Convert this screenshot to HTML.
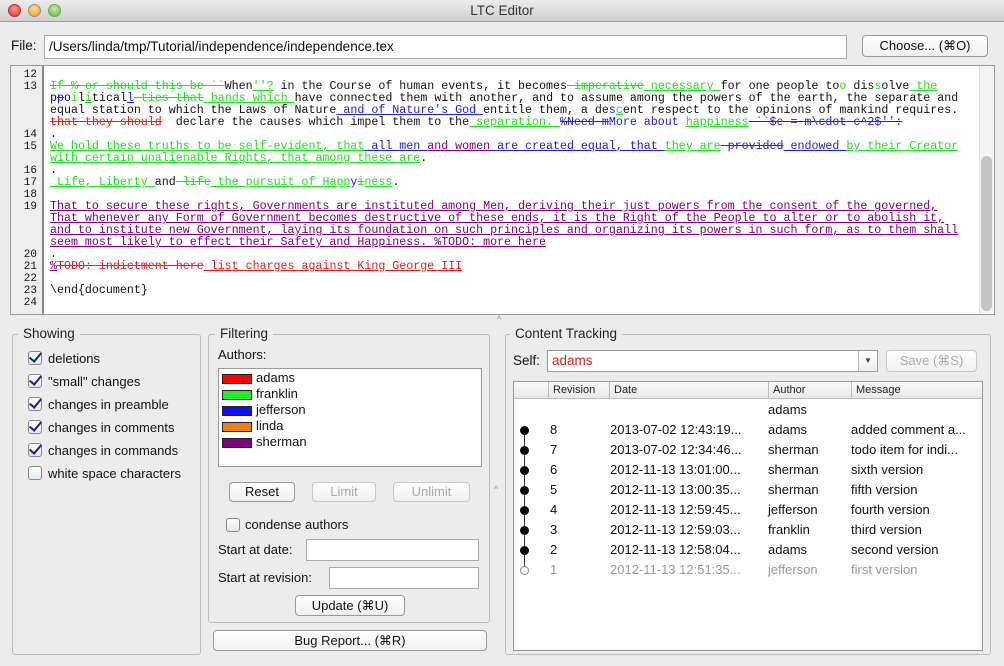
<!DOCTYPE html>
<html><head><meta charset="utf-8">
<style>
*{box-sizing:border-box;margin:0;padding:0}
body{width:1004px;height:666px;background:#ececec;font-family:"Liberation Sans",sans-serif;font-size:13px;color:#111;position:relative;overflow:hidden}
.abs{position:absolute;white-space:nowrap}
#title{left:0;top:0;width:1004px;height:22px;background:linear-gradient(#ececec,#cfcfcf);border-bottom:1px solid #999;text-align:center;line-height:22px;font-size:13.5px;color:#333}
.dot{position:absolute;top:4px;width:13px;height:13px;border-radius:50%}
.in{background:#fff;border:1px solid #aaa}
.btn{position:absolute;background:linear-gradient(#fff,#f0f0f0);border:1px solid #999;border-radius:4px;text-align:center;font-size:13px;color:#111;white-space:nowrap}
.btn.dis{color:#aaa;border-color:#c8c8c8}
#ed{left:10px;top:65px;width:985px;height:250px;background:#fff;border:1px solid #999}
#gut{left:0;top:0;width:33px;height:248px;background:#eee;border-right:2px solid #888;font-family:"Liberation Mono",monospace;font-size:11px;text-align:right;padding-right:4px}
.ln{position:absolute;right:5px;height:12px;line-height:12px}
#txt{left:39px;top:3px;font-family:"Liberation Mono",monospace;font-size:11.65px;line-height:12px;white-space:pre;color:#111}
.g{color:#22e022}.b{color:#2020e0}.r{color:#e02020}.p{color:#800080}
.u{text-decoration:underline}.s{text-decoration:line-through}
fieldset{position:absolute;border:1px solid #bbb;border-radius:3px}
.leg{position:absolute;background:#ececec;padding:0 5px;font-size:13.5px;color:#222;white-space:nowrap}
.cb{position:absolute;left:16px;width:14px;height:14px;border:1px solid #888;border-radius:3px;background:linear-gradient(#fff,#dfe8f5)}
.cb.on::after{content:"";position:absolute;left:3px;top:-2px;width:5px;height:10px;border:solid #1a2a66;border-width:0 2.5px 2.5px 0;transform:rotate(40deg)}
.cl{position:absolute;left:36px;font-size:13px;white-space:nowrap}
.sw{position:absolute;left:3px;width:30px;height:10px;border:1px solid #222}
.row{position:absolute;left:0;width:466px;height:20px;line-height:20px;font-size:13px}
.row span{position:absolute;white-space:nowrap}
</style></head><body>
<div id="title" class="abs">LTC Editor</div>
<div class="dot" style="left:8px;background:radial-gradient(circle at 50% 35%,#ff9a90,#d5332a);border:1px solid #a33"></div>
<div class="dot" style="left:28px;background:radial-gradient(circle at 50% 35%,#ffe08a,#e0a020);border:1px solid #a87"></div>
<div class="dot" style="left:48px;background:radial-gradient(circle at 50% 35%,#c8f0a0,#60b040);border:1px solid #6a4"></div>

<div class="abs" style="left:11px;top:38px;font-size:13.5px">File:</div>
<div class="abs in" style="left:44px;top:35px;width:803px;height:24px;padding-left:4px;line-height:22px;font-size:13.5px">/Users/linda/tmp/Tutorial/independence/independence.tex</div>
<div class="btn" style="left:862px;top:35px;width:126px;height:22px;line-height:20px">Choose... (⌘O)</div>

<div id="ed" class="abs">
<div id="gut" class="abs">
<div class="ln" style="top:3px">12</div><div class="ln" style="top:15px">13</div>
<div class="ln" style="top:63px">14</div><div class="ln" style="top:75px">15</div>
<div class="ln" style="top:99px">16</div><div class="ln" style="top:111px">17</div>
<div class="ln" style="top:123px">18</div><div class="ln" style="top:135px">19</div>
<div class="ln" style="top:183px">20</div><div class="ln" style="top:195px">21</div>
<div class="ln" style="top:207px">22</div><div class="ln" style="top:219px">23</div>
<div class="ln" style="top:231px">24</div>
</div>
<div id="txt" class="abs">
<span class="g s">If % or should this be ``</span>When<span class="g u">''?</span> in the Course of human events, it becomes<span class="g s"> imperative</span><span class="g u"> necessary </span>for one people to<span class="g">o</span> dis<span class="g">s</span>olve<span class="g u"> the</span>
p<span class="b s">p</span>o<span class="g">i</span>l<span class="g u">i</span>tical<span class="b u">l</span><span class="g s"> ties that</span><span class="g u"> bands which </span>have connected them with another, and to assume among the powers of the earth, the separate and
equal station to which the Laws of Nature<span class="b u"> and of Nature's God </span>entitle them, a de<span class="b">s</span><span class="g u">c</span>ent respect to the opinions of mankind requires.
<span class="r s">that they should</span>  declare the causes which impel them to the<span class="g u"> separation. </span><span class="b s">%Need m</span><span class="b">More about </span><span class="g u">happiness</span><span class="b s"> ``$e = m\cdot c^2$'':</span>
.
<span class="g u">We hold these truths to be self-evident, that</span><span class="b u"> all men </span><span class="p u">and women</span><span class="b u"> are created equal, that </span><span class="g u">they are</span><span class="b s"> provided</span><span class="b u"> endowed </span><span class="g u">by their Creator</span>
<span class="g u">with certain unalienable Rights, that among these are</span>.
.
<span class="g u"> Life, Liberty </span>and<span class="g s"> life</span><span class="g u"> the pursuit of Happ</span><span class="b">y</span><span class="g s">i</span><span class="g u">ness</span>.

<span class="p u">That to secure these rights, Governments are instituted among Men, deriving their just powers from the consent of the governed,</span>
<span class="p u">That whenever any Form of Government becomes destructive of these ends, it is the Right of the People to alter or to abolish it,</span>
<span class="p u">and to institute new Government, laying its foundation on such principles and organizing its powers in such form, as to them shall</span>
<span class="p u">seem most likely to effect their Safety and Happiness. %TODO: more here</span>
.
<span class="p u">%</span><span class="r s">TODO: indictment here</span><span class="r u"> list charges against King George III</span>

\end{document}
</div>
<div class="abs" style="left:968px;top:0;width:15px;height:248px;background:#f4f4f4;border-left:1px solid #ddd"></div>
<div class="abs" style="left:970px;top:90px;width:11px;height:155px;background:#c4c4c4;border-radius:6px"></div>
</div>

<!-- Showing -->
<fieldset style="left:12px;top:334px;width:189px;height:321px"></fieldset>
<div class="leg" style="left:18px;top:326px">Showing</div>
<div class="abs" style="left:12px;top:334px;width:189px">
<div class="cb on" style="top:17px"></div><div class="cl" style="top:17px">deletions</div>
<div class="cb on" style="top:40px"></div><div class="cl" style="top:40px">"small" changes</div>
<div class="cb on" style="top:63px"></div><div class="cl" style="top:63px">changes in preamble</div>
<div class="cb on" style="top:86px"></div><div class="cl" style="top:86px">changes in comments</div>
<div class="cb on" style="top:109px"></div><div class="cl" style="top:109px">changes in commands</div>
<div class="cb" style="top:132px"></div><div class="cl" style="top:132px">white space characters</div>
</div>

<!-- Filtering -->
<fieldset style="left:208px;top:334px;width:282px;height:289px"></fieldset>
<div class="leg" style="left:215px;top:326px">Filtering</div>
<div class="abs" style="left:218px;top:347px">Authors:</div>
<div class="abs in" style="left:218px;top:368px;width:264px;height:99px;border-color:#999">
<div class="sw" style="top:5px;background:#f00"></div><div class="abs" style="left:37px;top:1px">adams</div>
<div class="sw" style="top:21px;background:#20f020"></div><div class="abs" style="left:37px;top:17px">franklin</div>
<div class="sw" style="top:37px;background:#1010f0"></div><div class="abs" style="left:37px;top:33px">jefferson</div>
<div class="sw" style="top:53px;background:#f08010"></div><div class="abs" style="left:37px;top:49px">linda</div>
<div class="sw" style="top:69px;background:#800080"></div><div class="abs" style="left:37px;top:65px">sherman</div>
</div>
<div class="btn" style="left:229px;top:482px;width:66px;height:20px;line-height:18px">Reset</div>
<div class="btn dis" style="left:312px;top:482px;width:64px;height:20px;line-height:18px">Limit</div>
<div class="btn dis" style="left:393px;top:482px;width:77px;height:20px;line-height:18px">Unlimit</div>
<div class="cb" style="left:226px;top:518px"></div><div class="abs" style="left:245px;top:517px">condense authors</div>
<div class="abs" style="left:218px;top:542px">Start at date:</div>
<div class="abs in" style="left:306px;top:539px;width:173px;height:22px"></div>
<div class="abs" style="left:218px;top:570px">Start at revision:</div>
<div class="abs in" style="left:329px;top:567px;width:150px;height:22px"></div>
<div class="btn" style="left:295px;top:595px;width:110px;height:21px;line-height:19px">Update (⌘U)</div>
<div class="btn" style="left:213px;top:630px;width:274px;height:21px;line-height:19px">Bug Report... (⌘R)</div>
<div class="abs" style="left:494px;top:484px;font-size:9px;color:#888">^</div>
<div class="abs" style="left:497px;top:314px;font-size:9px;color:#888">^</div>

<!-- Content tracking -->
<fieldset style="left:505px;top:334px;width:486px;height:321px"></fieldset>
<div class="leg" style="left:510px;top:326px">Content Tracking</div>
<div class="abs" style="left:513px;top:353px;font-size:13.5px">Self:</div>
<div class="abs in" style="left:547px;top:350px;width:331px;height:22px;border-color:#999">
<div class="abs" style="left:4px;top:2px;color:#e02020;font-size:13.5px">adams</div>
<div class="abs" style="left:310px;top:0;width:19px;height:20px;border-left:1px solid #bbb;background:linear-gradient(#fff,#eee);font-size:8px;text-align:center;line-height:20px;color:#444">▼</div>
</div>
<div class="btn dis" style="left:886px;top:350px;width:91px;height:22px;line-height:20px">Save (⌘S)</div>
<div class="abs in" style="left:513px;top:381px;width:470px;height:270px;border-color:#999">
<div class="abs" style="left:0;top:0;width:468px;height:17px;background:linear-gradient(#fafafa,#e8e8e8);border-bottom:1px solid #bbb;font-size:11px;line-height:17px;color:#222">
<span class="abs" style="left:34px;border-left:1px solid #bbb;padding-left:4px">Revision</span>
<span class="abs" style="left:95px;border-left:1px solid #bbb;padding-left:4px">Date</span>
<span class="abs" style="left:254px;border-left:1px solid #bbb;padding-left:4px">Author</span>
<span class="abs" style="left:337px;border-left:1px solid #bbb;padding-left:4px">Message</span>
</div>
<div class="abs" style="left:10px;top:48px;width:1px;height:140px;background:#333"></div>
<div class="row" style="top:18px"><span style="left:254px">adams</span></div>
<div class="row" style="top:38px"><span style="left:36px">8</span><span style="left:96px">2013-07-02 12:43:19...</span><span style="left:254px">adams</span><span style="left:337px">added comment a...</span></div>
<div class="row" style="top:58px"><span style="left:36px">7</span><span style="left:96px">2013-07-02 12:34:46...</span><span style="left:254px">sherman</span><span style="left:337px">todo item for indi...</span></div>
<div class="row" style="top:78px"><span style="left:36px">6</span><span style="left:96px">2012-11-13 13:01:00...</span><span style="left:254px">sherman</span><span style="left:337px">sixth version</span></div>
<div class="row" style="top:98px"><span style="left:36px">5</span><span style="left:96px">2012-11-13 13:00:35...</span><span style="left:254px">sherman</span><span style="left:337px">fifth version</span></div>
<div class="row" style="top:118px"><span style="left:36px">4</span><span style="left:96px">2012-11-13 12:59:45...</span><span style="left:254px">jefferson</span><span style="left:337px">fourth version</span></div>
<div class="row" style="top:138px"><span style="left:36px">3</span><span style="left:96px">2012-11-13 12:59:03...</span><span style="left:254px">franklin</span><span style="left:337px">third version</span></div>
<div class="row" style="top:158px"><span style="left:36px">2</span><span style="left:96px">2012-11-13 12:58:04...</span><span style="left:254px">adams</span><span style="left:337px">second version</span></div>
<div class="row" style="top:178px;color:#999"><span style="left:36px">1</span><span style="left:96px">2012-11-13 12:51:35...</span><span style="left:254px">jefferson</span><span style="left:337px">first version</span></div>
<div class="abs" style="left:6px;top:44px;width:9px;height:9px;border-radius:50%;background:#000"></div>
<div class="abs" style="left:6px;top:64px;width:9px;height:9px;border-radius:50%;background:#000"></div>
<div class="abs" style="left:6px;top:84px;width:9px;height:9px;border-radius:50%;background:#000"></div>
<div class="abs" style="left:6px;top:104px;width:9px;height:9px;border-radius:50%;background:#000"></div>
<div class="abs" style="left:6px;top:124px;width:9px;height:9px;border-radius:50%;background:#000"></div>
<div class="abs" style="left:6px;top:144px;width:9px;height:9px;border-radius:50%;background:#000"></div>
<div class="abs" style="left:6px;top:164px;width:9px;height:9px;border-radius:50%;background:#000"></div>
<div class="abs" style="left:6px;top:184px;width:9px;height:9px;border-radius:50%;background:#fff;border:1px solid #888"></div>
</div>
</body></html>
